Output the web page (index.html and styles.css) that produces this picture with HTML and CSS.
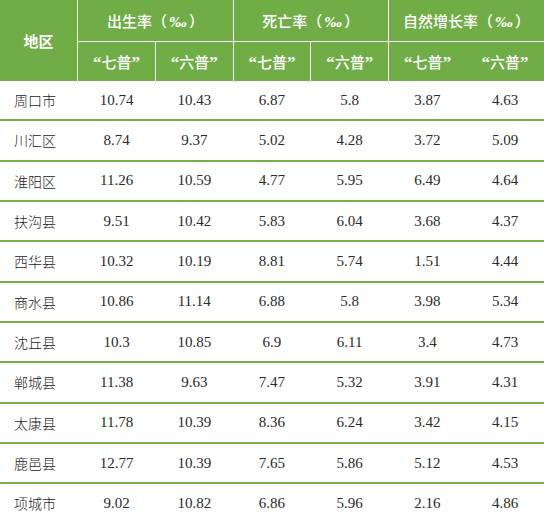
FILE: index.html
```html
<!DOCTYPE html>
<html lang="zh">
<head>
<meta charset="utf-8">
<link rel="stylesheet" href="styles.css">
</head>
<body>
<table class="stats">
  <colgroup>
    <col class="c-area"><col><col><col><col><col><col>
  </colgroup>
  <thead>
    <tr class="h1">
      <th rowspan="2" class="area-head">地区</th>
      <th colspan="2">出生率（<span class="pm">‰</span>）</th>
      <th colspan="2">死亡率（<span class="pm">‰</span>）</th>
      <th colspan="2">自然增长率（<span class="pm">‰</span>）</th>
    </tr>
    <tr class="h2">
      <th><span class="q">“</span>七普<span class="q">”</span></th><th><span class="q">“</span>六普<span class="q">”</span></th>
      <th><span class="q">“</span>七普<span class="q">”</span></th><th><span class="q">“</span>六普<span class="q">”</span></th>
      <th class="nosep"><span class="q">“</span>七普<span class="q">”</span></th><th><span class="q">“</span>六普<span class="q">”</span></th>
    </tr>
  </thead>
  <tbody>
    <tr><td class="name">周口市</td><td>10.74</td><td>10.43</td><td>6.87</td><td>5.8</td><td>3.87</td><td>4.63</td></tr>
    <tr><td class="name">川汇区</td><td>8.74</td><td>9.37</td><td>5.02</td><td>4.28</td><td>3.72</td><td>5.09</td></tr>
    <tr><td class="name">淮阳区</td><td>11.26</td><td>10.59</td><td>4.77</td><td>5.95</td><td>6.49</td><td>4.64</td></tr>
    <tr><td class="name">扶沟县</td><td>9.51</td><td>10.42</td><td>5.83</td><td>6.04</td><td>3.68</td><td>4.37</td></tr>
    <tr><td class="name">西华县</td><td>10.32</td><td>10.19</td><td>8.81</td><td>5.74</td><td>1.51</td><td>4.44</td></tr>
    <tr><td class="name">商水县</td><td>10.86</td><td>11.14</td><td>6.88</td><td>5.8</td><td>3.98</td><td>5.34</td></tr>
    <tr><td class="name">沈丘县</td><td>10.3</td><td>10.85</td><td>6.9</td><td>6.11</td><td>3.4</td><td>4.73</td></tr>
    <tr><td class="name">郸城县</td><td>11.38</td><td>9.63</td><td>7.47</td><td>5.32</td><td>3.91</td><td>4.31</td></tr>
    <tr><td class="name">太康县</td><td>11.78</td><td>10.39</td><td>8.36</td><td>6.24</td><td>3.42</td><td>4.15</td></tr>
    <tr><td class="name">鹿邑县</td><td>12.77</td><td>10.39</td><td>7.65</td><td>5.86</td><td>5.12</td><td>4.53</td></tr>
    <tr class="last"><td class="name">项城市</td><td>9.02</td><td>10.82</td><td>6.86</td><td>5.96</td><td>2.16</td><td>4.86</td></tr>
  </tbody>
</table>
</body>
</html>
```

FILE: styles.css
```css
html, body {
  margin: 0;
  padding: 0;
  background: #ffffff;
}

.stats {
  width: 544px;
  table-layout: fixed;
  border-collapse: collapse;
  border-spacing: 0;
  font-family: "Liberation Serif", "Noto Sans CJK SC", serif;
}

.stats th {
  background: #70ad47;
  color: #ffffff;
  font-family: "Liberation Serif", "Noto Sans CJK SC", serif;
  font-weight: 500;
  font-size: 15px;
  padding: 0;
  text-align: center;
  border-right: 1px solid #ffffff;
  border-bottom: 1px solid #ffffff;
}

.stats th .pm {
  font-family: "DejaVu Serif", serif;
  font-style: italic;
  font-weight: 700;
  font-size: 13px;
  margin: 0 2px;
}

.stats th .q {
  font-family: "Liberation Serif", serif;
  font-weight: 700;
  font-size: 17px;
}

.stats th:last-child {
  border-right: none;
}

.stats th.nosep {
  border-right: none;
}

.stats .h1 th {
  height: 41px;
}

.stats .h2 th {
  height: 39px;
  border-bottom: none;
}

.stats .area-head {
  font-weight: 700;
  border-bottom: none;
}

.stats td {
  height: 38.33px;
  padding: 0;
  text-align: center;
  font-size: 15px;
  color: #2a2a2a;
  border-bottom: 2px solid #7aad4e;
}

.stats tr.last td {
  border-bottom: none;
}

.stats td.name {
  text-align: left;
  padding-left: 14px;
  font-family: "Noto Sans CJK SC", sans-serif;
  font-weight: 300;
  font-size: 14px;
  color: #222222;
}
```
